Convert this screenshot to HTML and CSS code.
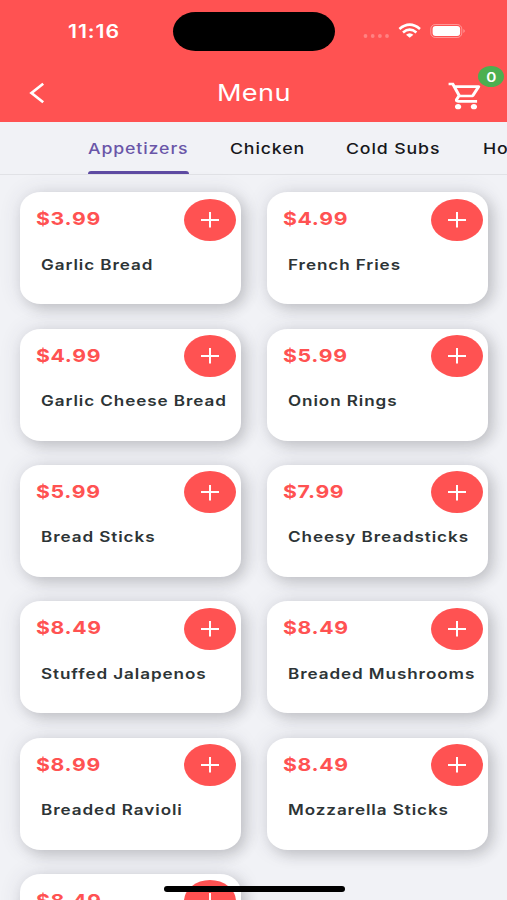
FILE: index.html
```html
<!DOCTYPE html>
<html lang="en">
<head>
<meta charset="utf-8">
<title>Menu</title>
<link rel="stylesheet" href="styles.css">
</head>
<body>
<div class="screen">
  <header class="header">
    <div class="status">
      <span class="time wide">11:16</span>
      <div class="island"></div>
      <svg class="signals" width="104" height="18" viewBox="0 0 104 18">
        <g fill="#fff" opacity=".28"><circle cx="3.500" cy="14" r="1.900"/><circle cx="10.700" cy="14" r="1.900"/><circle cx="17.900" cy="14" r="1.900"/><circle cx="25" cy="14" r="1.900"/></g>
        <g fill="none" stroke="#fff" stroke-width="2.600"><path d="M37.400 7Q47.700-1.600 58 7"/><path d="M41 10.400Q47.700 4.800 54.400 10.400"/></g>
        <path d="M44 12.700Q47.700 9.600 51.400 12.700L47.700 15.700Z" fill="#fff"/>
        <rect x="68.800" y="2.500" width="31" height="13" rx="4.500" fill="none" stroke="#fff" opacity=".4"/>
        <rect x="70.600" y="4" width="27.500" height="10" rx="3" fill="#fff"/>
        <path d="M101.500 7q2.300 2 0 4z" fill="#fff" opacity=".5"/>
      </svg>
    </div>
    <div class="bar">
      <svg class="back" width="16" height="22" viewBox="0 0 16 22"><path d="M14.200 1.800L2.500 11l11.700 9.200" fill="none" stroke="#fff" stroke-width="2.700"/></svg>
      <h1 class="title wide">Menu</h1>
      <div class="cart">
        <svg width="38" height="32" viewBox="0 0 24 24" preserveAspectRatio="none"><path fill="#fff" d="M15.550 13c.75 0 1.410-.41 1.750-1.030l3.580-6.490A.996.996 0 0 0 20.010 4H5.210l-.94-2H1v2h2l3.600 7.590-1.350 2.440C4.520 15.370 5.480 17 7 17h12v-2H7l1.100-2h7.450zM6.160 6h12.150l-2.760 5H8.530L6.160 6zM7 18c-1.100 0-1.990.9-1.990 2S5.900 22 7 22s2-.9 2-2-.9-2-2-2zm10 0c-1.100 0-1.990.9-1.990 2s.89 2 1.990 2 2-.9 2-2-.9-2-2-2z"/></svg>
        <span class="badge"><span class="count wide">0</span></span>
      </div>
    </div>
  </header>
  <nav class="tabs">
    <div class="tab active"><span class="wide">Appetizers</span></div>
    <div class="tab chicken"><span class="wide">Chicken</span></div>
    <div class="tab subs"><span class="wide">Cold Subs</span></div>
    <div class="tab"><span class="wide">Ho</span></div>
  </nav>
  <main class="grid">
    <article class="card"><div class="price wide">$3.99</div><div class="add"></div><div class="name wide">Garlic Bread</div></article>
    <article class="card"><div class="price wide">$4.99</div><div class="add"></div><div class="name wide">French Fries</div></article>
    <article class="card"><div class="price wide">$4.99</div><div class="add"></div><div class="name wide">Garlic Cheese Bread</div></article>
    <article class="card"><div class="price wide">$5.99</div><div class="add"></div><div class="name wide">Onion Rings</div></article>
    <article class="card"><div class="price wide">$5.99</div><div class="add"></div><div class="name wide">Bread Sticks</div></article>
    <article class="card"><div class="price wide">$7.99</div><div class="add"></div><div class="name wide">Cheesy Breadsticks</div></article>
    <article class="card"><div class="price wide">$8.49</div><div class="add"></div><div class="name wide">Stuffed Jalapenos</div></article>
    <article class="card"><div class="price wide">$8.49</div><div class="add"></div><div class="name wide">Breaded Mushrooms</div></article>
    <article class="card"><div class="price wide">$8.99</div><div class="add"></div><div class="name wide">Breaded Ravioli</div></article>
    <article class="card"><div class="price wide">$8.49</div><div class="add"></div><div class="name wide">Mozzarella Sticks</div></article>
    <article class="card"><div class="price wide">$8.49</div><div class="add"></div></article>
  </main>
  <div class="home"></div>
</div>
</body>
</html>
```
FILE: styles.css
```css
* { box-sizing: border-box; }
body { margin: 0; font-family: Inter, "Liberation Sans", sans-serif; }
.screen { position: relative; width: 507px; height: 900px; overflow: hidden; background: #f1f2f6; }
.wide { display: inline-block; transform: scaleX(1.18); transform-origin: 0 50%; white-space: nowrap; }

.header { height: 122px; background: #ff5252; color: #fff; }
.status { display: grid; grid-template-columns: 173px 162px 1fr; height: 64px; padding-top: 12px; }
.time { justify-self: start; margin: 9px 0 0 68px; font-size: 18px; line-height: 22px; font-weight: 600; letter-spacing: .8px; }
.island { height: 39px; border-radius: 23px / 20px; background: #000; }
.signals { margin: 10px 0 0 27px; }
.bar { display: grid; grid-template-columns: 217px 230px 60px; height: 58px; }
.back { margin: 18px 0 0 29px; }
.title { margin: 14px 0 0; font-size: 23px; line-height: 30px; font-weight: 400; letter-spacing: .3px; }
.cart { position: relative; }
.cart svg { display: block; margin: 16px 0 0; }
.badge { position: absolute; left: 31px; top: 2px; width: 26px; height: 21px; border-radius: 50%; background: #4caf50; display: flex; justify-content: center; align-items: center; }
.count { font-size: 13px; font-weight: 600; transform-origin: 50% 50%; }

.tabs { display: flex; height: 53px; padding-left: 88px; border-bottom: 1px solid #e1e2e6; color: #17171b; overflow: hidden; }
.tab { flex: none; height: 52px; width: 101px; margin-right: 41px; padding-top: 16px; font-size: 15px; line-height: 22px; font-weight: 500; letter-spacing: .75px; }
.chicken { width: 75px; }
.subs { width: 96px; }
.active { color: #6a56a8; }
.active::after { content: ""; display: block; height: 3px; margin-top: 11px; border-radius: 3px 3px 0 0; background: #5e4ba3; }

.grid { display: grid; grid-template-columns: 221px 221px; grid-auto-rows: 112px; gap: 24.300px 26px; padding: 17.400px 20px 0; }
.card { display: grid; grid-template-columns: 164px 52px; grid-template-rows: 54px 1fr; border-radius: 21px / 18px; background: #fff; box-shadow: 5px 5px 14px rgba(0,0,0,.16), 0 0 22px rgba(60,60,80,.12); }
.price { justify-self: start; margin: 15px 0 0 16px; font-size: 18px; line-height: 24px; font-weight: 700; letter-spacing: .55px; color: #ff5252; }
.add { width: 52px; height: 42px; margin-top: 6.300px; border-radius: 50%; background: linear-gradient(#fff, #fff) 50% 50% / 18px 2px no-repeat, linear-gradient(#fff, #fff) 50% 50% / 2px 15.500px no-repeat, #ff5252; }
.name { grid-column: 1 / 3; justify-self: start; margin: 8.500px 0 0 21px; font-size: 14.500px; line-height: 20px; font-weight: 600; color: #2d3436; letter-spacing: .77px; }
.home { position: absolute; left: 164px; top: 886px; width: 181px; height: 6px; border-radius: 3px; background: #000; }
```
